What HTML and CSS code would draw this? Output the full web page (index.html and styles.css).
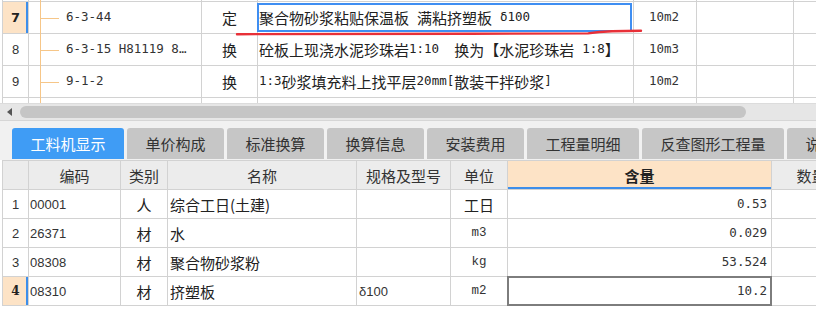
FILE: index.html
```html
<!DOCTYPE html>
<html lang="zh">
<head>
<meta charset="utf-8">
<title>工料机显示</title>
<link rel="stylesheet" href="styles.css">
</head>
<body>
<div class="top">
  <div class="tr stub">
    <div class="c"></div><div class="c tree"></div><div class="c"></div><div class="c"></div><div class="c"></div><div class="c"></div><div class="c"></div>
  </div>
  <div class="tr">
    <div class="c num cur"><b>7</b></div>
    <div class="c tree"><span class="m">6-3-44</span></div>
    <div class="c type">定</div>
    <div class="c name focus">聚合物砂浆粘贴保温板<span class="sp"></span>满粘挤塑板<span class="sp"></span><span class="m">δ100</span></div>
    <div class="c unit"><span class="m">10m2</span></div>
    <div class="c"></div>
    <div class="c"></div>
  </div>
  <div class="tr">
    <div class="c num">8</div>
    <div class="c tree"><span class="m">6-3-15 H81119 8…</span></div>
    <div class="c type">换</div>
    <div class="c name">砼板上现浇水泥珍珠岩<span class="m">1:10</span><span class="sp2"></span>换为【水泥珍珠岩<span class="sp"></span><span class="m">1:8</span>】</div>
    <div class="c unit"><span class="m">10m3</span></div>
    <div class="c"></div>
    <div class="c"></div>
  </div>
  <div class="tr">
    <div class="c num">9</div>
    <div class="c tree"><span class="m">9-1-2</span></div>
    <div class="c type">换</div>
    <div class="c name"><span class="m">1:3</span>砂浆填充料上找平层<span class="m">20mm[</span>散装干拌砂浆<span class="m">]</span></div>
    <div class="c unit"><span class="m">10m2</span></div>
    <div class="c"></div>
    <div class="c"></div>
  </div>
  <div class="tr">
    <div class="c num"></div><div class="c tree"></div><div class="c"></div><div class="c"></div><div class="c"></div><div class="c"></div><div class="c"></div>
  </div>
</div>

<div class="hs">
  <span class="arrow"></span>
  <div class="thumb"></div>
</div>

<div class="tabs">
  <div class="tab active w112">工料机显示</div>
  <div class="tab w97">单价构成</div>
  <div class="tab w97">标准换算</div>
  <div class="tab w97">换算信息</div>
  <div class="tab w97">安装费用</div>
  <div class="tab w112">工程量明细</div>
  <div class="tab w142">反查图形工程量</div>
  <div class="tab w97">说明信息</div>
</div>

<div class="bottom">
  <div class="br head">
    <div class="c"></div>
    <div class="c ctr">编码</div>
    <div class="c ctr">类别</div>
    <div class="c ctr">名称</div>
    <div class="c ctr">规格及型号</div>
    <div class="c ctr">单位</div>
    <div class="c ctr hl">含量</div>
    <div class="c ctr">数量</div>
  </div>
  <div class="br">
    <div class="c num">1</div>
    <div class="c code">00001</div>
    <div class="c ctr">人</div>
    <div class="c nm">综合工日(土建)</div>
    <div class="c"></div>
    <div class="c ctr">工日</div>
    <div class="c qty"><span class="m">0.53</span></div>
    <div class="c"></div>
  </div>
  <div class="br">
    <div class="c num">2</div>
    <div class="c code">26371</div>
    <div class="c ctr">材</div>
    <div class="c nm">水</div>
    <div class="c"></div>
    <div class="c ctr"><span class="u">m3</span></div>
    <div class="c qty"><span class="m">0.029</span></div>
    <div class="c"></div>
  </div>
  <div class="br">
    <div class="c num">3</div>
    <div class="c code">08308</div>
    <div class="c ctr">材</div>
    <div class="c nm">聚合物砂浆粉</div>
    <div class="c"></div>
    <div class="c ctr"><span class="u">kg</span></div>
    <div class="c qty"><span class="m">53.524</span></div>
    <div class="c"></div>
  </div>
  <div class="br">
    <div class="c num cur"><b class="serif">4</b></div>
    <div class="c code">08310</div>
    <div class="c ctr">材</div>
    <div class="c nm">挤塑板</div>
    <div class="c code spec">δ100</div>
    <div class="c ctr"><span class="u">m2</span></div>
    <div class="c qty picked"><span class="m">10.2</span></div>
    <div class="c"></div>
  </div>
</div>

<svg class="ink" width="816" height="318" viewBox="0 0 816 318">
  <path d="M237 34.2 C 330 34, 470 33.8, 588 33.4 C 594 32.4, 600 31.6, 612 31.3 L 641 30.8" stroke="#e83038" stroke-width="2.4" fill="none" stroke-linecap="round"/>
</svg>
</body>
</html>
```

FILE: styles.css
```css
* { box-sizing: border-box; margin: 0; padding: 0; }

html, body {
  width: 816px;
  height: 318px;
  overflow: hidden;
  background: #ffffff;
}

body {
  position: relative;
  font-family: "Noto Sans CJK SC", "Noto Sans", sans-serif;
  font-size: 15px;
  color: #222;
}

.m {
  font-family: "DejaVu Sans Mono", monospace;
  font-size: 12.5px;
}

.sp { display: inline-block; width: 8px; }
.sp2 { display: inline-block; width: 15px; }

/* ---------- top grid ---------- */
.top {
  height: 103px;
  overflow: hidden;
  margin-left: 2px;
  border-left: 1px solid #d2d2d2;
}

.tr {
  display: grid;
  grid-template-columns: 26px 173px 56px 376px 63px 97px 80px;
  height: 32px;
  border-bottom: 1px solid #d2d2d2;
}

.tr.stub { height: 2px; }

.c {
  position: relative;
  display: flex;
  align-items: center;
  white-space: nowrap;
  border-right: 1px solid #d2d2d2;
  line-height: 1;
}

.num {
  justify-content: center;
  font-family: "Liberation Sans", sans-serif;
  font-size: 13px;
  color: #333;
}

.num b {
  font-family: "DejaVu Sans", sans-serif;
  font-size: 13px;
  color: #222;
}

.num b.serif {
  font-family: "DejaVu Serif", serif;
  font-size: 12px;
}

.cur { background: #fde3c6; }
.cur::after {
  content: "";
  position: absolute;
  right: 0;
  top: 0;
  bottom: 0;
  width: 2px;
  background: #3d8eea;
}

.tree { padding-left: 37px; color: #333; }
.tree::before {
  content: "";
  position: absolute;
  left: 11px;
  top: 0;
  bottom: -1px;
  width: 1px;
  background: #f6c688;
}
.tr .tree:has(span)::after {
  content: "";
  position: absolute;
  left: 12px;
  top: 50%;
  width: 18px;
  height: 1px;
  background: #f6c688;
}

.type { justify-content: center; }
.name { padding-left: 1px; }
.unit { padding-left: 15px; color: #333; }

.focus::after {
  content: "";
  position: absolute;
  left: -1px;
  top: 1px;
  right: 1px;
  bottom: 1px;
  border: 2px solid #3f8ef2;
}

/* ---------- scrollbar ---------- */
.hs {
  height: 17px;
  background: #e6e6e6;
  display: flex;
  align-items: center;
  padding-left: 7px;
  border-top: 1px solid #dcdcdc;
}

.arrow {
  width: 0;
  height: 0;
  border-top: 4px solid transparent;
  border-bottom: 4px solid transparent;
  border-right: 5px solid #555;
}

.thumb {
  margin-left: 8px;
  width: 726px;
  height: 12px;
  border-radius: 6px;
  background: #c5c5c5;
}

/* ---------- tabs ---------- */
.tabs {
  height: 40px;
  background: #f1f1f1;
  border-top: 1px solid #d6d6d6;
  display: flex;
  align-items: flex-end;
  gap: 3px;
  padding-left: 12px;
  padding-bottom: 1px;
}

.tab {
  flex: none;
  height: 31px;
  background: #c6c6c6;
  color: #333;
  border-radius: 3px 3px 0 0;
  display: flex;
  align-items: center;
  justify-content: center;
  font-size: 15px;
}

.tab.active { background: #3f9cf5; color: #fff; }
.w97 { width: 97px; }
.w112 { width: 112px; }
.w142 { width: 142px; }

/* ---------- bottom grid ---------- */
.bottom {
  margin-left: 2px;
  border-left: 1px solid #d2d2d2;
  border-top: 1px solid #d2d2d2;
}

.br {
  display: grid;
  grid-template-columns: 26px 92px 47px 189px 94px 57px 264px 80px;
  height: 29px;
  border-bottom: 1px solid #d2d2d2;
}

.br.head { background: #ececec; color: #333; }

.ctr { justify-content: center; }

.hl {
  background: #fde3c6;
  font-weight: 700;
  color: #222;
  box-shadow: inset 0 -2px 0 #3d8eea;
}

.code {
  padding-left: 1px;
  font-family: "Liberation Sans", sans-serif;
  font-size: 13px;
  color: #333;
}

.spec { padding-left: 2px; }

.nm { padding-left: 2px; }

.u {
  font-family: "Liberation Mono", monospace;
  font-size: 12.5px;
  color: #333;
}

.qty {
  justify-content: flex-end;
  padding-right: 4px;
  color: #333;
}

.picked::after {
  content: "";
  position: absolute;
  left: -1px;
  top: -1px;
  right: -1px;
  bottom: -1px;
  border: 2px solid #7d7d7d;
}

/* ---------- red annotation ---------- */
.ink {
  position: absolute;
  left: 0;
  top: 0;
  pointer-events: none;
}
```
